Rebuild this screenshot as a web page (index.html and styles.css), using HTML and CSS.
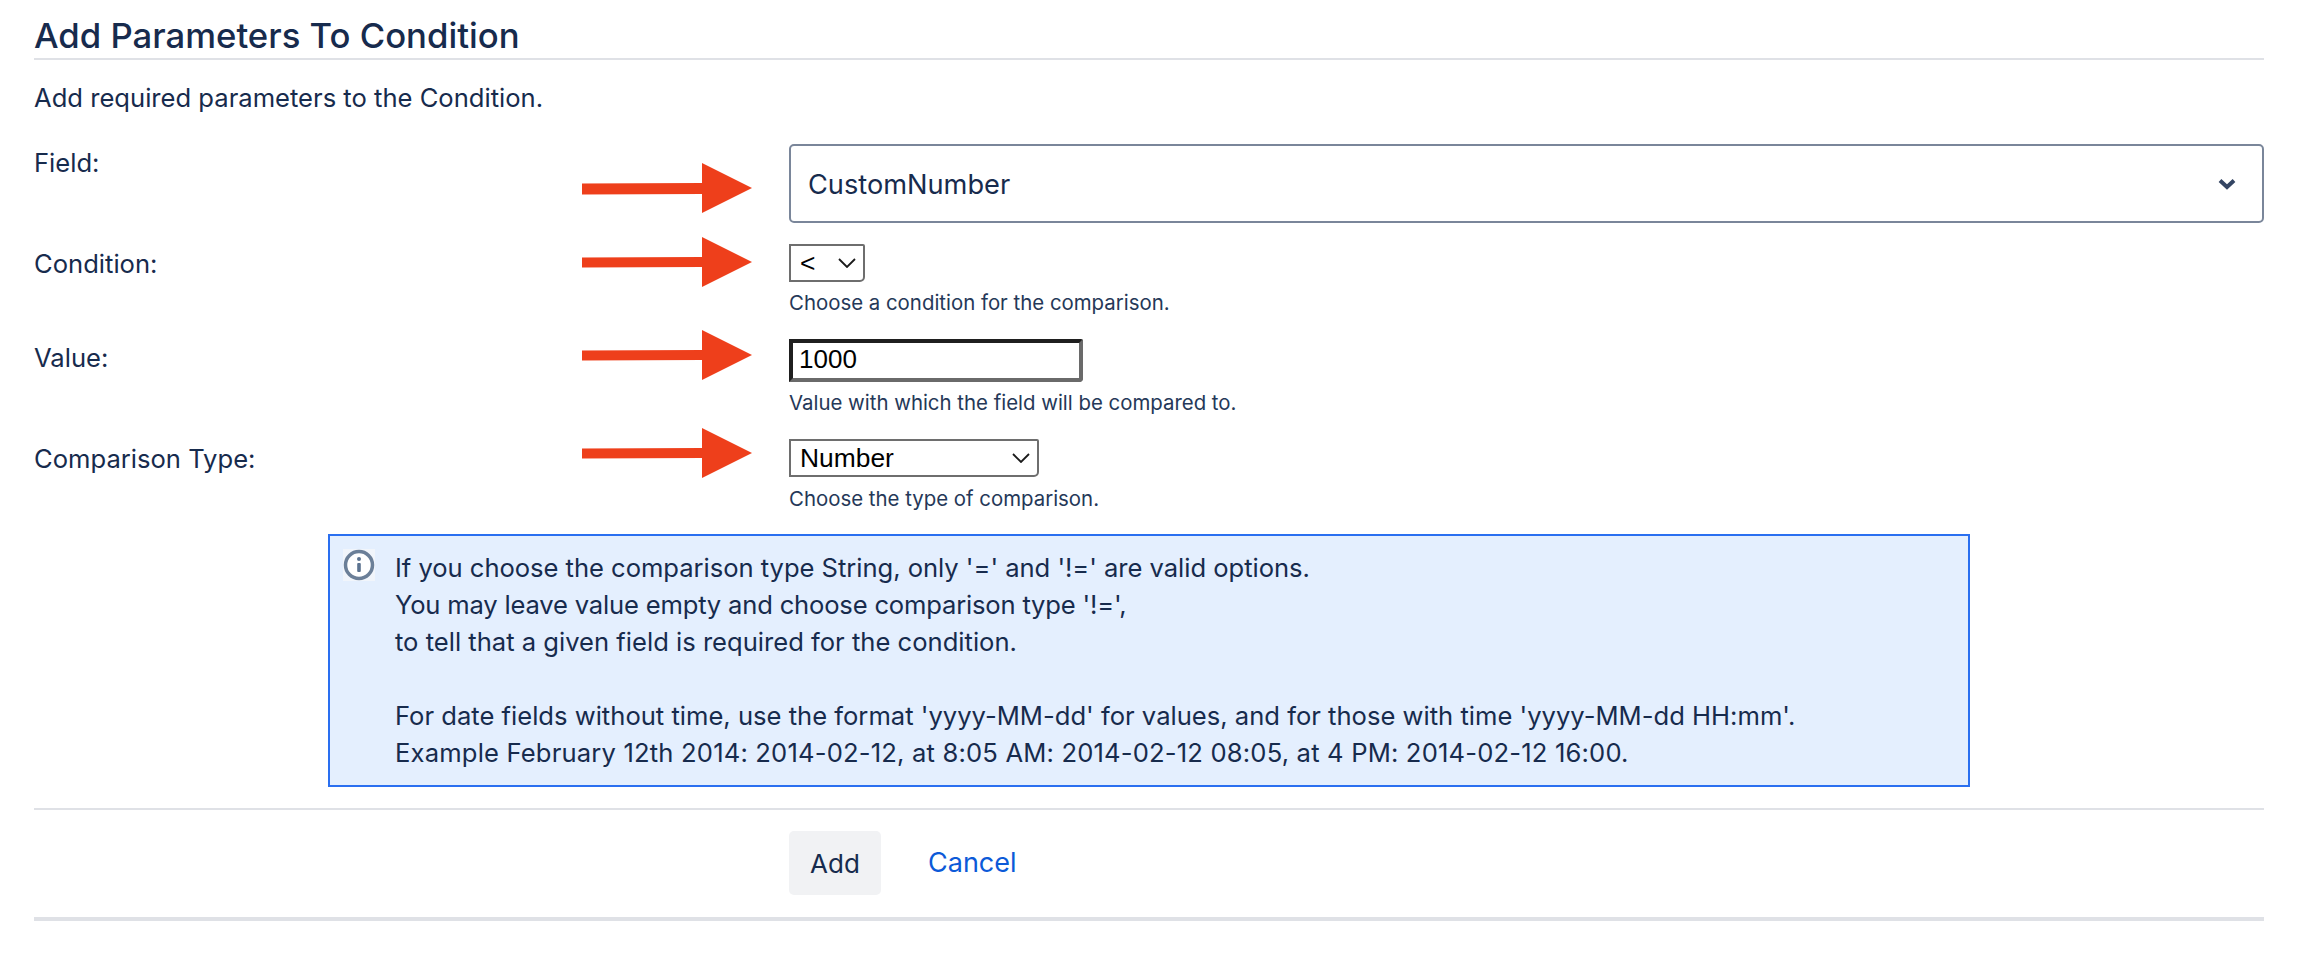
FILE: index.html
```html
<!DOCTYPE html>
<html lang="en">
<head>
<meta charset="utf-8">
<title>Add Parameters To Condition</title>
<link rel="stylesheet" href="styles.css">
</head>
<body>
<main class="page">
  <h1 class="title">Add Parameters To Condition</h1>
  <p class="intro">Add required parameters to the Condition.</p>
  <form class="form">
    <div class="row row-field">
      <label class="label">Field:</label>
      <svg class="arrow" width="170" height="50" viewBox="0 0 170 50"><path d="M0 20.500L120 20V0L170 25L120 50V31L0 31.500Z"/></svg>
      <div class="control">
        <div class="big-select"><span>CustomNumber</span>
          <svg class="big-chevron" width="18" height="12" viewBox="0 0 18 12"><path d="M2 2.500L9 9L16 2.500" /></svg>
        </div>
      </div>
    </div>
    <div class="row row-condition">
      <label class="label">Condition:</label>
      <svg class="arrow" width="170" height="50" viewBox="0 0 170 50"><path d="M0 20.500L120 20V0L170 25L120 50V30L0 30.500Z"/></svg>
      <div class="control">
        <div class="native native-short"><span>&lt;</span>
          <svg class="mini-chevron" width="18" height="10" viewBox="0 0 18 10"><path d="M1 1L9 9L17 1"/></svg>
        </div>
        <div class="help">Choose a condition for the comparison.</div>
      </div>
    </div>
    <div class="row row-value">
      <label class="label">Value:</label>
      <svg class="arrow" width="170" height="50" viewBox="0 0 170 50"><path d="M0 20.500L120 20V0L170 25L120 50V30L0 30.500Z"/></svg>
      <div class="control">
        <input class="text-input" type="text" value="1000">
        <div class="help">Value with which the field will be compared to.</div>
      </div>
    </div>
    <div class="row row-type">
      <label class="label">Comparison Type:</label>
      <svg class="arrow" width="170" height="50" viewBox="0 0 170 50"><path d="M0 20.500L120 20V0L170 25L120 50V30L0 30.500Z"/></svg>
      <div class="control">
        <div class="native native-wide"><span>Number</span>
          <svg class="mini-chevron" width="18" height="10" viewBox="0 0 18 10"><path d="M1 1L9 9L17 1"/></svg>
        </div>
        <div class="help">Choose the type of comparison.</div>
      </div>
    </div>
    <div class="info">
      <svg class="info-icon" width="32" height="32" viewBox="0 0 32 32"><rect width="32" height="32" fill="#f1f5fb"/><circle cx="16" cy="16" r="13.500" fill="#fff" stroke="#6b7f98" stroke-width="3.500"/><circle cx="16" cy="10" r="2" fill="#5c7390"/><rect x="14.200" y="14" width="3.600" height="9" rx="1" fill="#5c7390"/></svg>
      <div class="info-text">
        <div class="line-tight">If you choose the comparison type String, only '=' and '!=' are valid options.</div>
        <div class="line-narrow">You may leave value empty and choose comparison type '!=',</div>
        <div>to tell that a given field is required for the condition.</div>
        <div class="line-gap">For date fields without time, use the format 'yyyy-MM-dd' for values, and for those with time 'yyyy-MM-dd HH:mm'.</div>
        <div class="line-wide">Example February 12th 2014: 2014-02-12, at 8:05 AM: 2014-02-12 08:05, at 4 PM: 2014-02-12 16:00.</div>
      </div>
    </div>
    <div class="actions">
      <button class="btn" type="button">Add</button>
      <a class="cancel" href="#">Cancel</a>
    </div>
  </form>
</main>
</body>
</html>
```
FILE: styles.css
```css
* { box-sizing: border-box; }
html, body { margin: 0; background: #fff; }
body {
  font-family: Inter, "Noto Sans", sans-serif;
  color: #172b4d;
  font-size: 25.6px;
}
.page { padding: 0 38px 0 34px; height: 956px; overflow: hidden; }
.title {
  margin: 0;
  height: 60px;
  padding-top: 15px;
  font-size: 34.7px;
  line-height: 40px;
  font-weight: 500;
  border-bottom: 2px solid #dfe1e6;
}
.intro { margin: 0; height: 84px; padding-top: 21px; line-height: 34px; }
.row {
  position: relative;
  display: grid;
  grid-template-columns: 755px 1fr;
}
.row-field { height: 100px; }
.row-condition { height: 95px; }
.row-value { height: 100px; }
.row-type { height: 95px; }
.label { display: block; line-height: 34px; padding-top: 2px; }
.row-condition .label { padding-top: 3px; }
.row-type .label { padding-top: 3px; }
.row-value .label { padding-top: 2px; }
.arrow { position: absolute; left: 548px; fill: #ee3f1b; grid-column: 1; }
.row-field .arrow { top: 19px; }
.row-condition .arrow { top: -7px; }
.row-value .arrow { top: -9px; }
.row-type .arrow { top: -11px; }
.control { grid-column: 2; min-width: 0; }
.big-select {
  height: 79px;
  border: 2px solid #7a869a;
  border-radius: 5px;
  display: flex;
  align-items: center;
  justify-content: space-between;
  padding: 2px 26px 0 17px;
  font-size: 27.2px;
}
.big-chevron { fill: none; stroke: #344563; stroke-width: 4; margin-top: -2px; }
.native {
  height: 38px;
  border: 2px solid #6e6e6e;
  border-radius: 0 2px 5px 0;
  display: flex;
  align-items: center;
  justify-content: space-between;
  padding: 0 7px 0 9px;
  font-family: "Liberation Sans", Arial, sans-serif;
  font-size: 26.4px;
  color: #000;
}
.native-short { width: 76px; }
.native-wide { width: 250px; }
.mini-chevron { fill: none; stroke: #1a1a1a; stroke-width: 1.800; }
.text-input {
  display: block;
  width: 294px;
  height: 43px;
  padding: 0 0 2px 6px;
  font-family: "Liberation Sans", Arial, sans-serif;
  font-size: 26px;
  color: #000;
  background: #fff;
  border-style: solid;
  border-width: 4px 4px 4px 4px;
  border-color: #1f1f1f #6a6a6a #6a6a6a #1f1f1f;
  border-radius: 0 2px 4px 0;
  outline: none;
}
.help { font-size: 20.4px; line-height: 28px; margin-top: 7px; color: #253858; }
.row-type .help { margin-top: 8px; }
.info {
  display: flex;
  margin-left: 294px;
  width: 1642px;
  height: 253px;
  padding: 13px 0 0 13px;
  background: #e4effe;
  border: 2px solid #2a6ff0;
}
.info-icon { flex: none; margin-right: 20px; }
.info-text { line-height: 37px; }
.line-tight { letter-spacing: -0.04px; }
.line-narrow { letter-spacing: -0.19px; }
.line-gap { margin-top: 37px; }
.line-wide { letter-spacing: 0.17px; }
.actions {
  margin-top: 21px;
  height: 113px;
  padding: 21px 0 0 755px;
  display: flex;
  align-items: flex-start;
  border-top: 2px solid #dfe1e6;
  border-bottom: 4px solid #dfe1e6;
}
.btn {
  width: 92px;
  height: 64px;
  border: 0;
  border-radius: 5px;
  background: #f1f2f4;
  color: #172b4d;
  font: inherit;
  font-size: 26px;
  padding: 0;
}
.cancel {
  margin-left: 47px;
  line-height: 64px;
  font-size: 27px;
  color: #0c5ad8;
  text-decoration: none;
}
```
